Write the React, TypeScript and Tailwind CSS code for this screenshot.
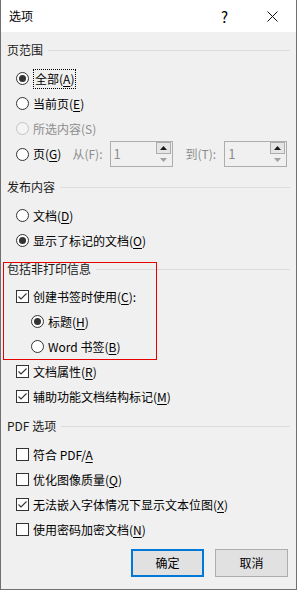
import React from "react";

const font = { fontFamily: '"Noto Sans CJK SC", "Noto Sans", sans-serif' };

// radio button, win10 style
const Radio = ({ checked = false, disabled = false }: { checked?: boolean; disabled?: boolean }) => (
  <span
    className={`flex h-[13px] w-[13px] shrink-0 items-center justify-center rounded-full border ${
      disabled ? "border-[#c4c4c4] bg-[#f4f4f4]" : "border-[#333333] bg-white"
    }`}
  >
    {checked && <span className="h-[7px] w-[7px] rounded-full bg-[#333333]" />}
  </span>
);

const Check = ({ checked = false }: { checked?: boolean }) => (
  <span className="flex h-[13px] w-[13px] shrink-0 items-center justify-center border border-[#333333] bg-white">
    {checked && (
      <svg width="11" height="11" viewBox="0 0 11 11">
        <polyline points="1.5,5.5 4,8 9.5,2.5" fill="none" stroke="#333333" strokeWidth="1.1" />
      </svg>
    )}
  </span>
);

// label with underlined access key
const Label = ({ text, k, tail = ")" }: { text: string; k?: string; tail?: string }) => (
  <span className="whitespace-nowrap">
    {text}
    {k && (
      <>
        (<u className="underline-offset-[2px]">{k}</u>
        {tail}
      </>
    )}
  </span>
);

const Header = ({ title }: { title: string }) => (
  <div className="flex h-[18px] items-center text-[12px] leading-[18px] text-[#1a1a1a]">
    <span className="whitespace-nowrap">{title}</span>
    <div className="ml-[5px] h-px flex-1 bg-[#dcdcdc]" />
  </div>
);

const Row = ({ children, indent = "pl-[9px]" }: { children: React.ReactNode; indent?: string }) => (
  <div className={`flex h-[25px] items-center gap-[4px] text-[12px] ${indent}`}>{children}</div>
);

const Spin = () => (
  <div className="flex h-[26px] w-[63px] items-center border border-[#adadad] bg-[#f0f0f0]">
    <span className="flex-1 pl-[3px] text-[13px] text-[#8d8d8d]">1</span>
    <div className="mr-[1px] flex h-[24px] w-[15px] flex-col">
      <div className="flex h-[12px] items-center justify-center border border-[#adadad] bg-[#e5e5e5]">
        <svg width="7" height="4" viewBox="0 0 7 4">
          <polygon points="0,4 7,4 3.5,0" fill="#1a1a1a" />
        </svg>
      </div>
      <div className="flex h-[12px] items-center justify-center">
        <svg width="7" height="4" viewBox="0 0 7 4">
          <polygon points="0,0 7,0 3.5,4" fill="#a0a0a0" />
        </svg>
      </div>
    </div>
  </div>
);

export default function App() {
  return (
    <div
      className="flex h-[590px] w-[297px] flex-col border-b border-l border-r border-[#707070] bg-[#f0f0f0] text-black"
      style={font}
    >
      {/* title bar */}
      <div className="flex h-[32px] shrink-0 items-center bg-white pl-[8px] text-[12px]">
        <span>选项</span>
        <span className="ml-auto mr-[39px] text-[15px] leading-none">?</span>
        <svg width="11" height="11" viewBox="0 0 11 11" className="mr-[18px]">
          <path d="M0.5 0.5 L10.5 10.5 M10.5 0.5 L0.5 10.5" stroke="#111" strokeWidth="1" />
        </svg>
      </div>

      <div className="flex flex-1 flex-col px-[6px] pt-[9px]">
        <Header title="页范围" />
        <div className="mt-[7px]">
          <Row>
            <Radio checked />
            <span className="border border-dotted border-black px-[1px] leading-[18px]">
              <Label text="全部" k="A" />
            </span>
          </Row>
          <Row>
            <Radio />
            <Label text="当前页" k="E" />
          </Row>
          <Row>
            <Radio disabled />
            <span className="text-[#8d8d8d]">所选内容(S)</span>
          </Row>
          <div className="flex h-[26px] items-center pl-[9px] text-[12px]">
            <Radio />
            <span className="ml-[4px]">
              <Label text="页" k="G" />
            </span>
            <span className="ml-[11px] text-[#8d8d8d]">从(F):</span>
            <div className="ml-[7px]">
              <Spin />
            </div>
            <span className="ml-[13px] text-[#8d8d8d]">到(T):</span>
            <div className="ml-[8px]">
              <Spin />
            </div>
          </div>
        </div>

        <div className="mt-[11px]">
          <Header title="发布内容" />
        </div>
        <div className="mt-[7px]">
          <Row>
            <Radio />
            <Label text="文档" k="D" />
          </Row>
          <Row>
            <Radio checked />
            <Label text="显示了标记的文档" k="O" />
          </Row>
        </div>

        <div className="relative mt-[7px]">
          <Header title="包括非打印信息" />
          <div className="mt-[6px]">
            <Row>
              <Check checked />
              <Label text="创建书签时使用" k="C" tail="):" />
            </Row>
            <Row indent="pl-[24px]">
              <Radio checked />
              <Label text="标题" k="H" />
            </Row>
            <Row indent="pl-[24px]">
              <Radio />
              <Label text="Word 书签" k="B" />
            </Row>
            <Row>
              <Check checked />
              <Label text="文档属性" k="R" />
            </Row>
            <Row>
              <Check checked />
              <Label text="辅助功能文档结构标记" k="M" />
            </Row>
          </div>
          {/* red annotation box */}
          <div className="pointer-events-none absolute left-[-4px] top-[2px] h-[98px] w-[154px] border border-[#e60000]" />
        </div>

        <div className="mt-[8px]">
          <Header title="PDF 选项" />
        </div>
        <div className="mt-[7px]">
          <Row>
            <Check />
            <span>
              符合 PDF/<u className="underline-offset-[2px]">A</u>
            </span>
          </Row>
          <Row>
            <Check />
            <Label text="优化图像质量" k="Q" />
          </Row>
          <Row>
            <Check checked />
            <Label text="无法嵌入字体情况下显示文本位图" k="X" />
          </Row>
          <Row>
            <Check />
            <Label text="使用密码加密文档" k="N" />
          </Row>
        </div>

        <div className="mt-[7px] flex justify-end gap-[11px] pr-[2px]">
          <button className="h-[28px] w-[73px] border-2 border-[#0078d7] bg-[#e1e1e1] text-[12px]">确定</button>
          <button className="h-[28px] w-[73px] border border-[#adadad] bg-[#e1e1e1] text-[12px]">取消</button>
        </div>
      </div>
    </div>
  );
}
